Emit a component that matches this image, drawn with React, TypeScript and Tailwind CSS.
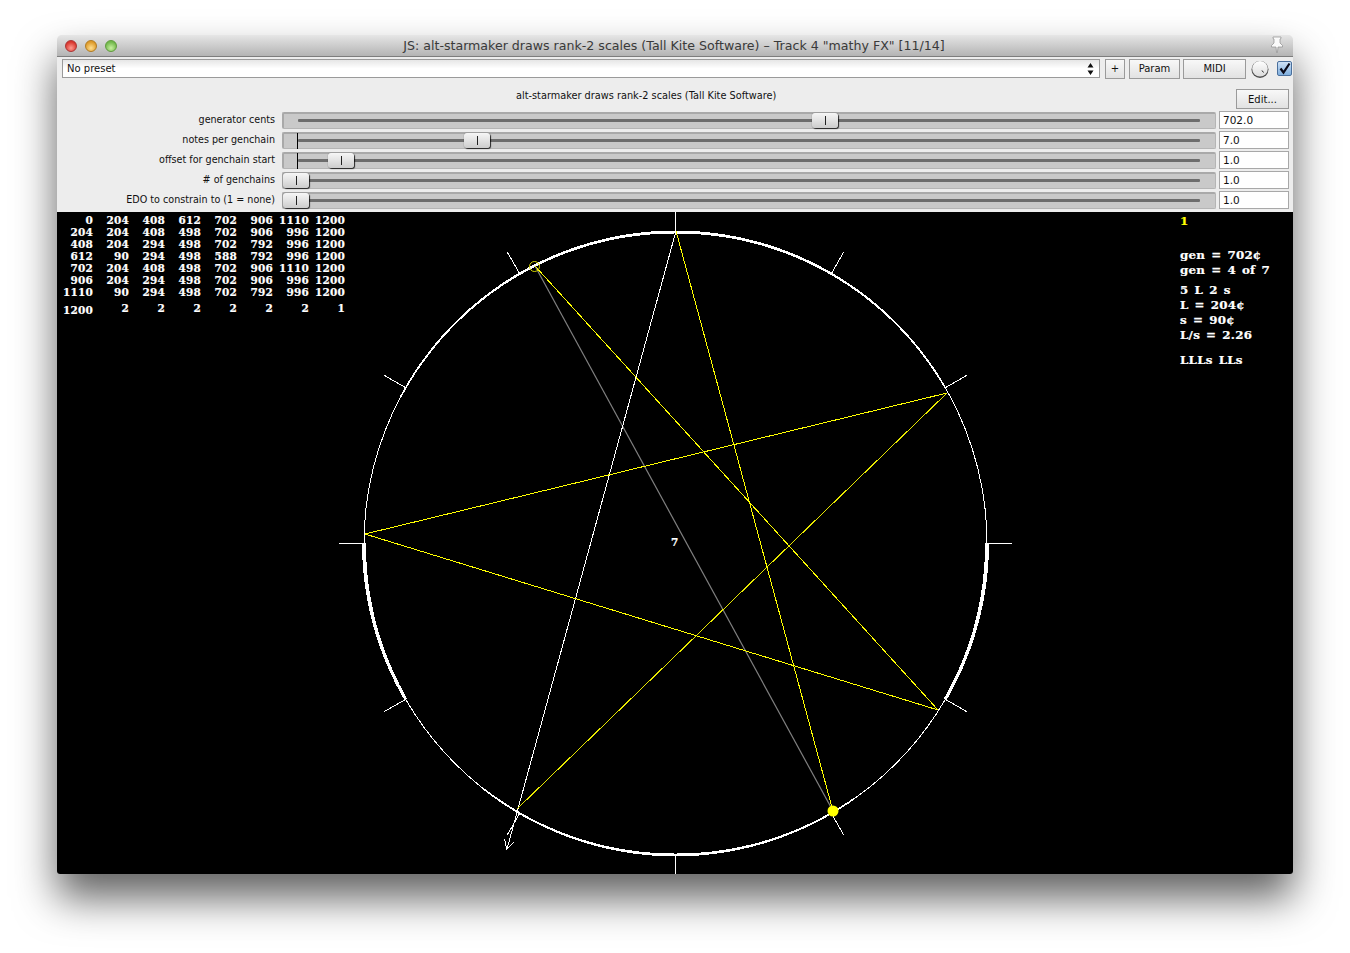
import React from "react";

const CX = 675.5;
const CY = 543.5;
const R = 311.5;
const pt = (deg: number, r: number) => {
  const a = (deg * Math.PI) / 180;
  return [CX + r * Math.sin(a), CY - r * Math.cos(a)];
};
const arc = (a: number, b: number) => {
  const [x1, y1] = pt(a, R);
  const [x2, y2] = pt(b, R);
  return `M${x1.toFixed(2)} ${y1.toFixed(2)}A${R} ${R} 0 0 1 ${x2.toFixed(2)} ${y2.toFixed(2)}`;
};
const bands: [number, number, number, number][] = [
  [0, 30, 3, 2.4],
  [30, 60, 2.3, 1.6],
  [90, 120, 4, 3],
  [145, 180, 1.6, 3],
  [180, 218, 3, 1.6],
  [240, 270, 3, 4],
  [298, 330, 1.6, 2.3],
  [330, 360, 2.4, 3],
];
const segs: { d: string; w: number }[] = [];
bands.forEach(([a, b, w1, w2]) => {
  const n = Math.ceil((b - a) / 3);
  for (let i = 0; i < n; i++) {
    const t = (i + 0.5) / n;
    segs.push({ d: arc(a + ((b - a) * i) / n, a + ((b - a) * (i + 1)) / n + 0.1), w: w1 + (w2 - w1) * t });
  }
});

const rows = [
  ["0", "204", "408", "612", "702", "906", "1110", "1200"],
  ["204", "204", "408", "498", "702", "906", "996", "1200"],
  ["408", "204", "294", "498", "702", "792", "996", "1200"],
  ["612", "90", "294", "498", "588", "792", "996", "1200"],
  ["702", "204", "408", "498", "702", "906", "1110", "1200"],
  ["906", "204", "294", "498", "702", "906", "996", "1200"],
  ["1110", "90", "294", "498", "702", "792", "996", "1200"],
];
const lastRow = ["2", "2", "2", "2", "2", "2", "1"];

const pixel = "[font-family:'DejaVu_Serif',serif] font-bold text-[10.5px] leading-[12px] tracking-[0.2px] text-white [-webkit-text-stroke:0.2px_currentColor]";

function Thumb({ className }: { className: string }) {
  return (
    <div className={`absolute top-[-1px] h-[15px] w-[26px] rounded-[3px] bg-gradient-to-b from-[#f6f6f6] via-[#e2e2e2] to-[#cccccc] shadow-[1px_1px_1px_rgba(0,0,0,0.8),0_0_1px_rgba(0,0,0,0.6)] flex items-center justify-center ${className}`}>
      <div className="h-[9px] w-px bg-[#222]" />
    </div>
  );
}

function SliderRow({ label, value, thumb, mark }: { label: string; value: string; thumb: string; mark?: boolean }) {
  return (
    <div className="flex h-[20px] items-center">
      <div className="w-[218px] text-right text-[9.6px] leading-[12px] text-[#111]">{label}</div>
      <div className="relative ml-[7px] h-[17px] w-[934px] rounded-[2px] border border-t-2 border-l-2 border-[#a9a9a9] border-r-[#b5b5b5] border-b-[#b5b5b5] bg-[#c9c9c9]">
        <div className="absolute left-[14px] top-[5px] h-[3px] w-[902px] rounded-[1px] bg-[#6d6d6d]" />
        {mark && <div className="absolute left-[13px] top-[-1px] h-[16px] w-px bg-black" />}
        <Thumb className={thumb} />
      </div>
      <div className="ml-[3px] flex h-[18px] w-[70px] items-center border border-[#a8a8a8] bg-white pl-[3px] pt-[2px] text-[10.5px] text-[#111]">{value}</div>
    </div>
  );
}

function Btn({ children, className }: { children: React.ReactNode; className: string }) {
  return (
    <div className={`flex items-center justify-center border border-[#9a9a9a] bg-gradient-to-b from-[#f8f8f8] to-[#e2e2e2] text-[10px] text-[#111] ${className}`}>
      {children}
    </div>
  );
}

export default function App() {
  return (
    <div className="h-[953px] w-[1350px] overflow-hidden bg-white pl-[57px] pt-[35px] [font-family:'DejaVu_Sans',sans-serif]">
      <div className="flex h-[839px] w-[1236px] flex-col overflow-hidden rounded-t-[5px] rounded-b-[3px] bg-[#ededed] shadow-[0_24px_42px_rgba(0,0,0,0.62)]">
        {/* Title bar */}
        <div className="relative flex h-[22px] shrink-0 items-center justify-center border-b border-[#7d7d7d] bg-gradient-to-b from-[#e6e6e6] to-[#b4b4b4]">
          <div className="absolute left-[8px] top-[5px] flex gap-[8px]">
            <div className="h-[12px] w-[12px] rounded-full border border-[#a33] bg-[radial-gradient(circle_at_50%_70%,#ff9a90,#d8362e_70%)]" />
            <div className="h-[12px] w-[12px] rounded-full border border-[#b07a20] bg-[radial-gradient(circle_at_50%_70%,#ffdf90,#dd9a2a_70%)]" />
            <div className="h-[12px] w-[12px] rounded-full border border-[#5f9a3c] bg-[radial-gradient(circle_at_50%_70%,#c8f0a0,#72b84c_70%)]" />
          </div>
          <div className="ml-[-2px] pt-px text-[12.6px] leading-[14px] text-[#3a3a3a] whitespace-nowrap">
            JS: alt-starmaker draws rank-2 scales (Tall Kite Software) – Track 4 "mathy FX" [11/14]
          </div>
          <svg className="absolute right-[9px] top-[1px]" width="14" height="17" viewBox="0 0 14 17">
            <path d="M3 1h8v1.500L10 3v4l2.500 2.500V11H8l-.6 5.500h-.8L6 11H1.500V9.500L4 7V3L3 2.500z" fill="#fafafa" stroke="#8c8c8c" strokeWidth="0.7" />
          </svg>
        </div>

        {/* Toolbar */}
        <div className="flex h-[22px] shrink-0 items-center pl-[5px] pt-px">
          <div className="flex h-[19px] w-[1038px] items-center justify-between border border-[#9a9a9a] bg-gradient-to-b from-[#e6e6e6] via-white to-white pl-[4px] pr-[5px] text-[10px] text-[#111]">
            <span>No preset</span>
            <svg width="7" height="14" viewBox="0 0 7 14">
              <path d="M3.500 1 6.500 5.500h-6zM3.500 13 .5 8.500h6z" fill="#111" />
            </svg>
          </div>
          <Btn className="ml-[5px] h-[20px] w-[20px]">+</Btn>
          <Btn className="ml-[4px] h-[20px] w-[51px]">Param</Btn>
          <Btn className="ml-[3px] h-[20px] w-[63px]">MIDI</Btn>
          <svg className="ml-[5px]" width="18" height="18" viewBox="0 0 18 18">
            <defs>
              <linearGradient id="kn" x1="0" y1="0" x2="0" y2="1">
                <stop offset="0" stopColor="#ffffff" />
                <stop offset="1" stopColor="#dcdcdc" />
              </linearGradient>
            </defs>
            <circle cx="9" cy="9.500" r="8.500" fill="#333" opacity="0.85" />
            <circle cx="9" cy="8.800" r="7.800" fill="url(#kn)" />
            <path d="M11 10.500l1.500 2" stroke="#222" strokeWidth="1" fill="none" />
          </svg>
          <div className="ml-[8px] flex h-[15px] w-[15px] items-center justify-center rounded-[2px] border border-[#4a6f9c] bg-gradient-to-b from-[#cfe2f7] to-[#7eaedd]">
            <svg width="13" height="13" viewBox="0 0 13 13">
              <path d="M2.500 6.500 5.500 10.500 11.500 1.500" stroke="#0a0a1a" strokeWidth="2.200" fill="none" />
            </svg>
          </div>
        </div>

        {/* Plugin heading */}
        <div className="relative h-[31px] shrink-0">
          <div className="absolute left-[459px] top-[11px] text-[9.75px] leading-[12px] text-[#111] whitespace-nowrap">
            alt-starmaker draws rank-2 scales (Tall Kite Software)
          </div>
          <Btn className="absolute left-[1179px] top-[10px] h-[20px] w-[53px]">Edit...</Btn>
        </div>

        {/* Sliders */}
        <div className="h-[102px] shrink-0">
          <SliderRow label="generator cents" value="702.0" thumb="left-[528px]" />
          <SliderRow label="notes per genchain" value="7.0" thumb="left-[180px]" mark />
          <SliderRow label="offset for genchain start" value="1.0" thumb="left-[44px]" mark />
          <SliderRow label="# of genchains" value="1.0" thumb="left-[-1px]" />
          <SliderRow label="EDO to constrain to (1 = none)" value="1.0" thumb="left-[-1px]" />
        </div>

        {/* Canvas */}
        <div className="relative min-h-0 flex-1 bg-black">
          <svg className="absolute inset-0 h-full w-full" viewBox="57 212 1236 662" shapeRendering="crispEdges">
            <circle cx={CX} cy={CY} r={R} fill="none" stroke="#fff" strokeWidth="1" />
            {segs.map((s, i) => (
              <path key={i} d={s.d} fill="none" stroke="#fff" strokeWidth={s.w} />
            ))}
            {Array.from({ length: 12 }).map((_, i) => {
              const [x1, y1] = pt(i * 30, R);
              const [x2, y2] = pt(i * 30, 336.5);
              return <line key={i} x1={x1} y1={y1} x2={x2} y2={y2} stroke="#fff" strokeWidth="1" />;
            })}
            <line x1="535" y1="266" x2="833" y2="811" stroke="#808080" strokeWidth="1.2" shapeRendering="auto" />
            <line x1="676" y1="231" x2="507" y2="849" stroke="#fff" strokeWidth="1" />
            <path d="M504.500 839 506.700 849 514 842" fill="none" stroke="#fff" strokeWidth="1" />
            <line x1="365" y1="534" x2="947" y2="393" stroke="#ff0" strokeWidth="1" />
            <line x1="947" y1="393" x2="517" y2="809" stroke="#e8e800" strokeWidth="1" />
            <line x1="365" y1="534" x2="938" y2="710" stroke="#ff0" strokeWidth="1" />
            <line x1="535" y1="266" x2="938" y2="710" stroke="#ff0" strokeWidth="1" />
            <line x1="676" y1="231" x2="833" y2="811" stroke="#ff0" strokeWidth="1" />
            <circle cx="534.500" cy="266.500" r="5" fill="none" stroke="#d8d800" strokeWidth="1" shapeRendering="auto" />
            <circle cx="833" cy="811" r="5.500" fill="#ff0" shapeRendering="auto" />
          </svg>

          <div className={`absolute left-0 top-[2px] w-[288px] ${pixel}`}>
            {rows.map((r, i) => (
              <div key={i} className="grid h-[12px] grid-cols-[repeat(8,36px)] text-right">
                {r.map((v, j) => (
                  <span key={j}>{v}</span>
                ))}
              </div>
            ))}
            <div className="mt-[4px] grid grid-cols-[repeat(8,36px)] text-right">
              <span className="mt-[2px]">1200</span>
              {lastRow.map((v, j) => (
                <span key={j}>{v}</span>
              ))}
            </div>
          </div>

          <div className={`absolute left-[614px] top-[324px] ${pixel}`}>7</div>

          <div className={`absolute left-[1123px] top-[3px] origin-left scale-x-[1.13] ${pixel} whitespace-pre leading-[15px] [word-spacing:1.5px]`}>
            <div className="leading-[12px] text-[#ff0]">1</div>
            <div className="mt-[21px]">gen = 702¢</div>
            <div>gen = 4 of 7</div>
            <div className="mt-[5px]">5 L 2 s</div>
            <div>L = 204¢</div>
            <div>s = 90¢</div>
            <div>L/s = 2.26</div>
            <div className="mt-[10px]">LLLs LLs</div>
          </div>
        </div>
      </div>
    </div>
  );
}
